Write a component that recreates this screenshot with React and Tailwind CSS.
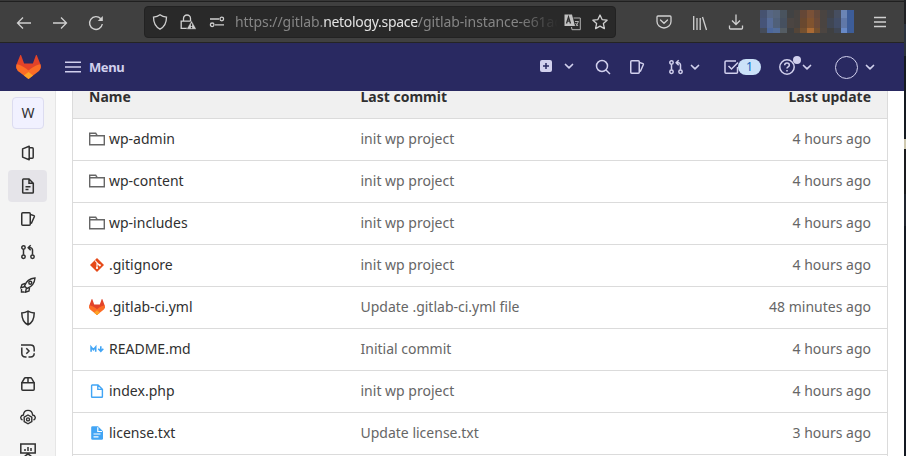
import React from "react";

const S = ({ children, size = 16, sw = 1.5, className = "", vb = "0 0 16 16" }) => (
  <svg width={size} height={size} viewBox={vb} fill="none" stroke="currentColor" strokeWidth={sw} className={"shrink-0 " + className}>
    {children}
  </svg>
);

const Chevron = ({ className }) => (
  <S className={className} sw={1.7}><path d="M4.500 6.500 8 9.800l3.500-3.300" strokeLinecap="round" strokeLinejoin="round" /></S>
);
const Issues = ({ className = "" }) => (
  <S className={className}>
    <rect x="1.750" y="1.750" width="8.500" height="12.500" rx="1" />
    <path d="M10.500 3.500 14 4.600c.4.150.5.500.400.900L11.200 12.800" strokeLinejoin="round" />
  </S>
);
const Merge = ({ className = "" }) => (
  <S className={className}>
    <circle cx="3.500" cy="3.500" r="1.700" /><circle cx="3.500" cy="12.800" r="1.700" /><circle cx="12.500" cy="12.800" r="1.700" />
    <path d="M3.500 5.500v5.300M12.500 10.800V6a2.200 2.200 0 0 0-2.200-2.200H8.500M10.700 1.300 8.200 3.800l2.500 2.500" />
  </S>
);
const Tanuki = ({ width, height, className = "" }) => (
  <svg width={width} height={height} viewBox="0 0 25 24" preserveAspectRatio="none" className={"shrink-0 " + className}>
    <path d="M.6 9.200 4.100.5c.2-.6.900-.6 1.100 0l2.900 7.900h8.800L19.800.5c.2-.6.900-.6 1.100 0l3.500 8.700.4 4L12.500 21 .2 13.200z" fill="#e24329" />
    <path d="M.6 9.200c3.400.5 6.500 2.100 9 4l7.100 5.600L12.500 24 2.300 16.200C.3 14.600-.3 11.800.6 9.200z" fill="#fc6d26" />
    <path d="M24.400 9.200c-3.400.5-6.500 2.100-9 4l-7.100 5.600 4.200 5.200 10.200-7.800c2-1.600 2.600-4.400 1.700-7z" fill="#fc6d26" />
    <path d="m12.500 17 4.600 3.500-4.600 3.500-4.600-3.500z" fill="#fca326" />
  </svg>
);

const MOSAIC = [
  ["#465270", "#566684", "#55647b", "#49535e", "#414243", "#484340", "#654736", "#7a5137", "#65493a", "#4a4441", "#414349", "#464e60", "#6b85b5", "#3d5d98"],
  ["#465478", "#566b96", "#506079", "#46505f", "#4b4542", "#484340", "#69482f", "#80532f", "#6b4a38", "#4a4441", "#3f4654", "#424d66", "#6078a8", "#3d5d98"],
  ["#454c5a", "#4c679c", "#526c99", "#545c63", "#3f4041", "#544538", "#74502f", "#a96a34", "#74502f", "#4c4541", "#3f4041", "#3f4654", "#6889c6", "#3d5d98"],
];
const Mosaic = () => (
  <div className="grid h-[23px] w-[94px] grid-cols-14 grid-rows-[8px_10px_5px]">
    {MOSAIC.flat().map((c, i) => <div key={i} style={{ backgroundColor: c }} />)}
  </div>
);

const BrowserBar = () => (
  <div className="h-[43px] shrink-0 border-b border-[#242424] bg-[#404040] text-[#d0d0d0]">
    <div className="h-[2px] border-b border-[#202020] bg-[#383838]" />
    <div className="flex h-10 items-center">
      <S className="ml-4 mt-[1px]" sw={1.300}><path d="M15 8H1.500M7 2.500 1.500 8 7 13.500" /></S>
      <S className="ml-5 mt-[1px]" sw={1.300}><path d="M1 8h13.500M9 2.500 14.500 8 9 13.500" /></S>
      <S className="ml-5 mt-[1px]" sw={1.400}><path d="M14.300 9A6.400 6.400 0 1 1 12.800 3.800" /><path d="M14.800 1v5h-5z" fill="currentColor" stroke="none" /></S>
      <div className="ml-10 flex h-8 w-[472px] items-center rounded-[4px] border border-[#222] bg-[#292929]">
        <S className="ml-[7px]" sw={1.300}><path d="M8 .8c2 1.500 4 2.100 6.500 2.300C14.500 9 12.500 13 8 15.200 3.500 13 1.500 9 1.500 3.100 4 2.900 6 2.300 8 .8z" /></S>
        <S className="ml-3" sw={1.300}>
          <path d="M3.500 7V4.500a3.500 3.500 0 0 1 7 0V7M8 14.300H1.200V7.200h10.300" />
          <path d="m11.500 6.500 5 8.800h-10z" fill="currentColor" stroke="#292929" strokeWidth=".5" /><path d="M11.500 9.500v2.800M11.500 13v1.200" stroke="#292929" />
        </S>
        <S className="ml-[13px]" sw={1.300}><circle cx="12.800" cy="5" r="1.800" /><circle cx="3.200" cy="10.800" r="1.800" /><path d="M1 5h9M6 10.800h9" /></S>
        <div className="ml-[10px] w-[323px] overflow-hidden whitespace-nowrap font-['Noto_Sans',sans-serif] text-[14px] leading-5 text-[#858585] [mask-image:linear-gradient(to_right,black_88%,transparent)]">
          <span className="tracking-[-0.08px]">https://gitlab.</span><span className="tracking-[-0.3px] text-[#e2e2e2]">netology.space</span><span className="tracking-[-0.1px]">/gitlab-instance-e61ac</span>
        </div>
        <svg width="17" height="17" viewBox="0 0 17 17" className="ml-[6px] shrink-0">
          <path d="M.5.500h7.500l3 11.500H.5z" fill="#c2c2c2" /><path d="m2.500 9.500 2-6.500 2 6.500M3.300 7.200h2.500" stroke="#303030" fill="none" strokeWidth="1.300" />
          <path d="M9.500 4h6.800v11.700H8L7.500 13" stroke="#b0b0b0" fill="none" /><path d="M11 7.500h3.500L12 12M11.500 9l2.500 3" stroke="#b0b0b0" fill="none" />
        </svg>
        <S className="ml-[11px]" sw={1.300}><path d="m8 1 2.100 4.600 5 .6-3.700 3.400 1 5L8 12.100l-4.400 2.500 1-5L.9 6.200l5-.6z" strokeLinejoin="round" /></S>
      </div>
      <S className="ml-10" sw={1.300}><path d="M2 2h12q1 0 1 1v4.500a7 6.500 0 0 1-14 0V3q0-1 1-1zM4.500 6 8 9.300 11.500 6" strokeLinecap="round" /></S>
      <S className="ml-5 mt-[1px]" sw={1.300}><path d="M1.700 1v14M5 3v12M8.200 3v12M10.500 2l4 13" /></S>
      <S className="ml-5 -mt-[1px]" sw={1.300}><path d="M8 .5v10M4 6.500l4 4 4-4M1.500 11.500V14q0 1 1 1h11q1 0 1-1v-2.500" /></S>
      <div className="-mt-[1px] ml-4"><Mosaic /></div>
      <S className="ml-[18px]" sw={1.300}><path d="M2 3.500h12M2 8h12M2 12.500h12" /></S>
    </div>
  </div>
);

const GitlabNav = () => (
  <header className="flex h-12 shrink-0 items-center bg-[#292961] text-[#d1d0ed]">
    <Tanuki width={25} height={24} className="ml-4" />
    <S className="ml-6" sw={1.500}><path d="M0 3.200h16M0 8h16M0 12.800h16" /></S>
    <span className="ml-2 w-[60px] text-[13px] font-bold leading-5 tracking-[-0.4px]">Menu</span>
    <svg width="16" height="16" viewBox="0 0 16 16" className="-mt-[3px] ml-[389px] shrink-0">
      <rect x="2" y="2" width="12" height="12" rx="2" fill="#d1d0ed" /><path d="M8 5v6M5 8h6" stroke="#292961" strokeWidth="1.500" />
    </svg>
    <Chevron className="-mt-[2px] ml-[7px]" />
    <S className="ml-[18px]"><circle cx="7" cy="7" r="5.500" /><path d="m11 11 4 4" /></S>
    <Issues className="ml-[18px]" />
    <Merge className="ml-[23px]" />
    <Chevron className="ml-[3px]" />
    <S className="ml-5"><path d="M14.500 8v5.200q0 1-1 1H3q-1 0-1-1V3q0-1 1-1h10M5.500 7l3 3L15 3.500" /></S>
    <span className="-ml-[1px] h-4 w-[23px] shrink-0 rounded-full bg-[#cbe2f9] text-center text-[12px] leading-4 text-[#1068bf]">1</span>
    <div className="relative ml-[18px] shrink-0">
      <S><circle cx="8" cy="8" r="7.200" /><path d="M5.700 6.300C5.700 3.300 10.300 3.400 10.300 6.200 10.300 7.900 8 7.800 8 9.500M8 11v1.600" /></S>
      <span className="absolute -top-[3px] left-[14px] size-2 rounded-full bg-[#d1d0ed]" />
    </div>
    <Chevron className="ml-1" />
    <span className="ml-5 size-[23px] shrink-0 rounded-full border border-[#d1d0ed]" />
    <Chevron className="ml-1" />
  </header>
);

const SIDE = [
  <S><path d="M9.200 1.200 2.600 3.900v8.200l6.600 2.700zM9.500 2.700h2.700q1 0 1 1v8.600q0 1-1 1H9.500" strokeLinejoin="round" /></S>,
  <S><path d="M9 1H3.500q-.8 0-.8.800v12.400q0 .8.800.8h9q.8 0 .8-.8V5.200zM9 1v4.200h4.300M5.500 8.700h5M5.500 11.500h3" /></S>,
  <Issues />,
  <Merge />,
  <S sw={1.400}><path d="M4.500 9C6 4.500 9.500 1.500 15 1c-.5 5.500-3.500 9-8 10.500zM5 6.500 2 7.500.8 10.800l3.700-1M9.500 10.800 9 14l-3.500 1.200.8-3.700M1.500 12v3h3" /><circle cx="10.300" cy="5.700" r="1.500" /></S>,
  <S><path d="M8 1.200c2 1.200 4 1.700 6.200 1.800C14.200 9 12 13 8 14.900 4 13 1.800 9 1.800 3 4 2.900 6 2.400 8 1.200zM8 1v14" /></S>,
  <S><path d="M1 2h9.500q3.700 0 3.700 3.700v2.800M1.800 4.500v5.800q0 3.700 3.700 3.700h1M8.500 14h2q3.700 0 3.700-3.700M6.300 5.300 9 8 6.300 10.700" /></S>,
  <S><path d="M1.800 6.800h12.400v6.500q0 1-1 1H2.800q-1 0-1-1zM1.800 6.800 4.300 2.500q.4-.7 1.200-.7h5q.8 0 1.200.7l2.500 4.300M8 2v5" /></S>,
  <S sw={1.400}><path d="M2.500 11C-.4 9.800.6 6.200 3.400 6 3.900-.2 12.100-.2 12.600 6c2.800.2 3.800 3.800.9 5" /><path d="m8 6 3.800 2.200v4.400L8 14.800l-3.800-2.200V8.200z" /><circle cx="8" cy="10.400" r="1.500" /></S>,
  <S><path d="M.8 2h14.400v9H.8zM5 7v2M8 5v4M11 6v3M8 11v2M4 15l3-2.500h2L12 15" /></S>,
];

const Sidebar = () => (
  <aside className="flex w-14 shrink-0 flex-col border-r border-[#e6e6e6] bg-[#f4f4f4] text-[#303030]">
    <div className="ml-3 mt-[6px] grid h-8 w-8 shrink-0 place-items-center rounded-[4px] border border-[#dcdcf0] bg-[#f1f1ff] text-[14px]">W</div>
    <nav className="ml-2 mt-2 flex w-[39px] flex-col gap-[1px]">
      {SIDE.map((icon, i) => (
        <div key={i} className={"flex h-8 shrink-0 items-center justify-center rounded-[4px] " + (i === 1 ? "bg-[#e5e4e9]" : "")}>{icon}</div>
      ))}
    </nav>
  </aside>
);

const Folder = () => <S className="text-[#666]" sw={1.400}><path d="M.7 13.800V2.200h6L8.200 4.700h7.100v9.100zM.7 4.700h7.800" /></S>;
const GitIcon = () => (
  <svg width="16" height="16" viewBox="0 0 16 16" className="shrink-0"><path d="m8 1 7 7-7 7-7-7z" fill="#e64a19" /><path d="M6 3.500 8 5.700v5.600M8 6l2.800 2.500" stroke="#fff" strokeWidth="1.100" fill="none" /><circle cx="8" cy="11" r="1.100" fill="#fff" /><circle cx="10.800" cy="8.300" r="1.100" fill="#fff" /></svg>
);
const Markdown = () => <S className="text-[#42a5f5]" sw={1.600}><path d="M2.100 10.800V6l2.300 2.700L6.700 6v4.800M11.800 5.200V10M9.300 7.800l2.500 2.500 2.500-2.500" /></S>;
const Php = () => <S className="text-[#42a5f5]" sw={1.400}><path d="M9 2H3.200q-.6 0-.6.600v11.100q0 .6.600.6h9.600q.6 0 .6-.6V6.200zM8.800 2v4.400h4.600" /></S>;
const Txt = () => (
  <svg width="16" height="16" viewBox="0 0 16 16" className="shrink-0"><path d="M3.500 1.300H9l5 5v7.200q0 1.300-1.300 1.300H3.500q-1.300 0-1.300-1.300V2.600q0-1.300 1.300-1.300z" fill="#42a5f5" /><path d="M8.800 2.300v4.200H13M4.500 9h7M4.500 11.800h5" stroke="#fff" fill="none" strokeWidth="1.200" /></svg>
);

const ROWS = [
  [<Folder />, "wp-admin", "init wp project", "4 hours ago"],
  [<Folder />, "wp-content", "init wp project", "4 hours ago"],
  [<Folder />, "wp-includes", "init wp project", "4 hours ago"],
  [<GitIcon />, ".gitignore", "init wp project", "4 hours ago"],
  [<Tanuki width={16} height={16} />, ".gitlab-ci.yml", "Update .gitlab-ci.yml file", "48 minutes ago"],
  [<Markdown />, "README.md", "Initial commit", "4 hours ago"],
  [<Php />, "index.php", "init wp project", "4 hours ago"],
  [<Txt />, "license.txt", "Update license.txt", "3 hours ago"],
];

const FileTable = () => (
  <main className="ml-4 mr-4 flex-1 border-x border-[#dbdbdb]">
    <div className="flex h-7 items-start border-b border-[#dbdbdb] bg-[#f0f0f0] px-4 font-bold text-[#303030]">
      <div className="-mt-1 w-[271.5px]">Name</div>
      <div className="-mt-1 flex-1">Last commit</div>
      <div className="-mt-1">Last update</div>
    </div>
    {ROWS.map(([icon, name, msg, time]) => (
      <div key={name} className="flex h-[42px] items-center border-b border-[#dbdbdb] px-4 pb-[2px] text-[#666]">
        <div className="flex w-[271.5px] items-center gap-1 text-[#303030]">{icon}<span>{name}</span></div>
        <div className="flex-1">{msg}</div>
        <div>{time}</div>
      </div>
    ))}
  </main>
);

// Sliver of the window behind the browser
const BehindWindow = () => (
  <div className="flex w-[2px] flex-col bg-[#141922]">
    <div className="h-6 bg-[#202124]" />
    <div className="h-8 bg-[#2b323d]" />
    <div className="h-[83px] bg-[#151a21]" />
    <div className="h-[10px] bg-[#cfc9b0]" />
    <div className="h-[45px] bg-[#1a1b1e]" />
    <div className="h-8 bg-[#20252f]" />
  </div>
);

export default function App() {
  return (
    <div className="flex h-[456px] w-[906px] overflow-hidden font-['Noto_Sans',sans-serif] text-[14px] leading-5">
      <div className="flex w-[904px] shrink-0 flex-col bg-white">
        <BrowserBar />
        <GitlabNav />
        <div className="flex min-h-0 flex-1 overflow-hidden">
          <Sidebar />
          <FileTable />
        </div>
      </div>
      <BehindWindow />
    </div>
  );
}
